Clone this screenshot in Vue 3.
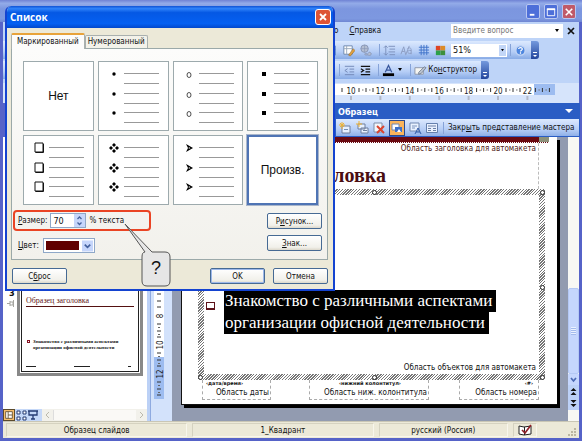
<script setup>
import { ref } from 'vue'

const size = ref('70')
const zoom = ref('51%')
const question = ref('')
const selected = ref(7)
const presets = [
  { kind: 'none', label: 'Нет' },
  { kind: 'dot' },
  { kind: 'circle' },
  { kind: 'square' },
  { kind: 'box' },
  { kind: 'diamonds' },
  { kind: 'arrow' },
  { kind: 'custom', label: 'Произв.' }
]
const rows = [12, 32, 51]
const rulerMarks = [10, 12, 14, 16, 18, 20, 22]
const sideMarks = [8, 10, 12]
const handles = ['tr', 'mr', 'br', 'bc', 'bl', 'tc']
</script>

<template>
  <div class="window">
    <header class="titlebar">
      <button class="cap" aria-label="Свернуть"><svg viewBox="0 0 13 13"><path d="M3 9.5h5" stroke="#fff" stroke-width="2" /></svg></button>
      <button class="cap" aria-label="Развернуть"><svg viewBox="0 0 13 13"><path d="M2.5 3.5h8v7h-8z" fill="none" stroke="#fff" /><path d="M2 3.5h9" stroke="#fff" stroke-width="2" /></svg></button>
      <button class="cap red" aria-label="Закрыть"><svg viewBox="0 0 13 13"><path d="M3 3l7 7M10 3l-7 7" stroke="#fff" stroke-width="1.7" /></svg></button>
    </header>

    <nav class="menubar">
      <div class="menus">
        <a href="#">о</a>
        <a href="#"><u>С</u>правка</a>
      </div>
      <label class="ask">
        <input v-model="question" placeholder="Введите вопрос" aria-label="Введите вопрос">
        <svg viewBox="0 0 6 4"><path d="M1 0h4L3 3z" /></svg>
      </label>
      <button class="plain" aria-label="Закрыть окно"><svg width="8" height="8" viewBox="0 0 8 8"><path d="M1 1l6 6M7 1L1 7" stroke="#111" stroke-width="1.7" /></svg></button>
    </nav>

    <div class="bar">
      <div class="strip">
        <svg class="ico wide" viewBox="0 0 16 14"><path d="M1 2h12v10H1z" fill="#fff" stroke="#3767b8" /><path d="M1 6h12M6 2v10" stroke="#3767b8" /></svg>
        <svg class="ico" viewBox="0 0 14 14"><path d="M2 2h9v9H2z" fill="#fff" stroke="#6b86ad" /><path d="M2 5h9M5 2v9" stroke="#9ab" /><path d="M7 12l5-7 2 2-5 6z" fill="#e2a13c" stroke="#8c6730" stroke-width=".6" /></svg>
        <svg class="ico" viewBox="0 0 14 14"><circle cx="6" cy="5" r="4" fill="#b5bfd2" stroke="#8795b5" /><path d="M2 5h8M6 1v8" stroke="#8795b5" stroke-width=".7" /><path d="M6 11c2-2 3 1 4-1s2-1 3 0-1 3-3 2-2 1-4-1z" fill="#b5bfd2" stroke="#8795b5" /></svg>
        <i class="sep"></i>
        <svg class="ico" viewBox="0 0 14 14"><path d="M6 2.5h7M7 5.5h6M6 8.5h7M7 11.5h6M3 2v10M1 4l2-2 2 2M1 10l2 2 2-2" fill="none" stroke="#7b90bb" /></svg>
        <svg class="ico" viewBox="0 0 14 14"><path d="M1 11l3-8 2 8M2 8h3M8 5c3-2 4 0 4 1v5M12 7c-5-1-5 4 0 3M10 2L6 12" fill="none" stroke="#8b9cc0" /></svg>
        <svg class="ico" viewBox="0 0 14 14"><path d="M2 3.5h11M2 6.5h11M2 9.5h11M4.500 1v11M7.500 1v11M10.500 1v11" stroke="#3f73c9" /></svg>
        <svg class="ico color" viewBox="0 0 14 14"><path d="M2 2h5v5H2z" fill="#dd4425" /><path d="M7 2h5v5H7z" fill="#dc8b27" /><path d="M2 7h5v5H2z" fill="#2ca04a" /><path d="M7 7h5v5H7z" fill="#3d8f3c" /></svg>
        <span class="zoom">
          <select v-model="zoom" aria-label="Масштаб"><option>51%</option></select>
          <svg viewBox="0 0 6 4"><path d="M1 0h4L3 3z" /></svg>
        </span>
        <i class="sep"></i>
        <svg class="ico" viewBox="0 0 14 14"><circle cx="7" cy="7" r="5" fill="#4d86df" stroke="#c3d5f4" stroke-width="1.500" /><path d="M5 5.500c0-2 4-2 4 0 0 1.200-2 1.200-2 2.500M7 9v1.500" fill="none" stroke="#fff" stroke-width="1.300" /></svg>
      </div>
      <svg class="grip" viewBox="0 0 8 18"><path d="M2 11.500h4" stroke="#fff" /><path d="M2 14h4L4 16z" fill="#fff" /></svg>
      <i class="after first"></i>
    </div>

    <div class="bar">
      <div class="strip">
        <i class="sep"></i>
        <svg class="ico mid" viewBox="0 0 14 14"><path d="M2 2.500h10M7 5.500h5M7 8.500h5M2 11.500h10M5 5L2 7l3 2" fill="none" stroke="#7187b5" /></svg>
        <svg class="ico mid" viewBox="0 0 14 14"><path d="M2 2.500h10M7 5.500h5M7 8.500h5M2 11.500h10M2 5l3 2-3 2" fill="none" stroke="#111" stroke-width="1.300" /></svg>
        <i class="sep"></i>
        <svg class="ico letter" viewBox="0 0 14 14"><path d="M3.500 9L7 1.500 10.500 9M5 6.500h4" fill="none" stroke="#38579c" stroke-width="1.300" /><path d="M1 10h12v3H1z" /></svg>
        <svg class="tri" viewBox="0 0 6 4"><path d="M1 0h4L3 3z" /></svg>
        <i class="sep"></i>
        <button class="tool"><svg class="ico" viewBox="0 0 14 14"><path d="M1 4h9v7H1z" fill="#f6f6f2" stroke="#8b95a8" /><path d="M5 9l6-6 2 1-5 6-3 1z" fill="#b9c2cf" stroke="#5f6b7e" stroke-width=".7" /></svg><span>Ко<u>н</u>структор</span></button>
      </div>
      <svg class="grip" viewBox="0 0 8 18"><path d="M2 11.500h4" stroke="#fff" /><path d="M2 14h4L4 16z" fill="#fff" /></svg>
      <i class="after second"></i>
    </div>

    <div class="ruler">
      <svg width="222" height="20" viewBox="0 0 222 20">
        <path d="M0 1h201v11H0z" fill="#fff" /><path d="M201 1h21v11h-21z" fill="#9dbcf0" />
        <g v-for="(m, i) in rulerMarks" :key="m">
          <path :d="`M${25 + i * 29.400} 5v4M${32 + i * 29.400} 5v4M${39 + i * 29.400} 5v4`" stroke="#333" transform="translate(1 0)" />
          <path :d="`M${28 + i * 29.400} 7h1.500M${35 + i * 29.400} 7h1.500`" stroke="#777" transform="translate(1 0)" />
          <path :d="`M${18 + i * 29.400} 13v4`" stroke="#b3b9c8" stroke-width="2" />
          <text :x="18 + i * 29.400" y="10.500" text-anchor="middle">{{ m }}</text>
        </g>
        <path d="M1 5v4M9 5v4" stroke="#333" />
      </svg>
    </div>

    <section class="master">
      <div class="mhead"><b>Образец</b><svg viewBox="0 0 8 5"><path d="M0 0h8L4 4z" fill="#fff" /></svg></div>
      <div class="mtools">
        <svg class="mi" viewBox="0 0 14 14"><path d="M4 5h8v7H4z" fill="#e8f1ff" stroke="#6e7f9d" /><path d="M6 8.500h4" stroke="#7890b5" /><path d="M4 1v7M1 4h6M2 2l4 4M6 2L2 6" stroke="#efb335" /></svg>
        <svg class="mi" viewBox="0 0 14 14"><path d="M3 3h7v5H3zM6 7h7v5H6z" fill="#e8f1ff" stroke="#6e7f9d" /><path d="M8 9.500h4" stroke="#6e7f9d" /><path d="M4 0v6M1 3h6" stroke="#efb335" /></svg>
        <svg class="mi" viewBox="0 0 14 14"><path d="M2 2h8v9H2z" fill="#f2f5fa" stroke="#7e8fa9" /><path d="M5 5l7 7M12 5l-7 7" stroke="#dc442d" stroke-width="2" /></svg>
        <svg class="mi on" viewBox="0 0 14 14"><path d="M2 3h7v6H2z" fill="#fff" stroke="#6e86b3" /><path d="M5 6h7v5H5z" fill="#3e70c8" /><path d="M7 11l2-3 2 3z" fill="#fff" /></svg>
        <svg class="mi" viewBox="0 0 14 14"><path d="M2 2h9v8H2z" fill="#e9f1ff" stroke="#7389b1" /><path d="M4 5h5M4 7h3" stroke="#7d94bd" /><path d="M7 13l3-6 3 6M8 11h4" fill="none" stroke="#335ca9" /></svg>
        <svg class="mi" viewBox="0 0 14 14"><path d="M1.500 2.500h11v9h-11z" fill="#e9f1ff" stroke="#6580ad" /><path d="M3 5h8M3 7.500h3M8 7.500h3M3 9.500h3M8 9.500h3" stroke="#6a7fa5" /></svg>
        <i class="sep"></i>
        <button class="tool">Закр<u>ы</u>ть представление мастера</button>
      </div>
    </section>

    <main class="work">
      <aside class="outline">
        <div class="thumbs">
          <div class="num"><b>3</b><svg width="8" height="7" viewBox="0 0 8 7"><path d="M0 3.500h3M3 1v5M3 2h3v3H3M6.500 0v7" fill="none" stroke="#a5a5a0" /></svg></div>
          <div class="thumb">
            <div class="thumb-in">
              <h3>Образец заголовка</h3>
              <p><i></i><span>Знакомство с различными аспектами организации офисной деятельности</span></p>
              <div class="dashes"><i></i><i class="long"></i><i class="short"></i></div>
            </div>
          </div>
        </div>
        <div class="views">
          <button class="view active" aria-label="Обычный"><svg viewBox="0 0 12 12"><path d="M2 2h8v8H2zM5 2v8M5 6h5" fill="#fff" stroke="#5b4a2c" /></svg></button>
          <button class="view" aria-label="Сортировщик"><svg viewBox="0 0 12 12"><path d="M2 2h3v3H2zM8 2h3v3H8zM2 8h3v3H2zM8 8h3v3H8z" fill="#fff" stroke="#253b73" /></svg></button>
          <button class="view" aria-label="Показ"><svg viewBox="0 0 12 12"><path d="M1 2h10M2 2v4h8V2M6 6v4M4 10h4" fill="none" stroke="#253b73" stroke-width="1.300" /></svg></button>
          <div class="hscroll"><svg viewBox="0 0 6 8"><path d="M5 1L2 4l3 3" /></svg><i></i><svg viewBox="0 0 6 8"><path d="M1 1l3 3-3 3" /></svg></div>
        </div>
      </aside>

      <div class="vruler">
        <svg width="10" height="112" viewBox="0 0 10 112">
          <path d="M0 0h10v70H0z" fill="#fff" /><path d="M0 70h10v42H0z" fill="#9dbcf0" />
          <g v-for="(m, i) in sideMarks" :key="m">
            <text :transform="`translate(8.500 ${29 + i * 29}) rotate(-90)`" text-anchor="middle">{{ m }}</text>
            <path :d="`M3 ${37 + i * 29}h4M3 ${44 + i * 29}h4M3 ${51 + i * 29 - 1}h4`" stroke="#333" />
            <path :d="`M4 ${40.500 + i * 29}h2M4 ${47.500 + i * 29}h2`" stroke="#666" />
          </g>
          <path d="M3 1h4M3 7h4M3 14h4M3 20h4" stroke="#333" />
        </svg>
      </div>

      <div class="canvas">
        <article class="slide">
          <div class="band"><i></i></div>
          <div class="title-area">
            <small>Область заголовка для автомакета</small>
            <h1>ловка</h1>
          </div>
          <div class="object">
            <i v-for="h in handles" :key="h" class="handle" :class="h"></i>
            <div class="object-in">
              <div class="item">
                <i class="mark"></i>
                <p><mark>Знакомство с различными аспектами</mark><mark>организации офисной деятельности</mark></p>
              </div>
              <small>Область объектов для автомакета</small>
            </div>
          </div>
          <footer class="fields">
            <div class="date"><em>‹дата/время›</em><small>Область даты</small></div>
            <div class="foot"><em>‹нижний колонтитул›</em><small>Область ниж. колонтитула</small></div>
            <div class="no"><em>‹#›</em><small>Область номера</small></div>
          </footer>
        </article>
      </div>

      <div class="vscroll">
        <i class="knob"></i>
        <svg class="down" viewBox="0 0 11 11"><path d="M3 4l2.500 3L8 4" fill="none" stroke="#4b69b3" stroke-width="1.700" /></svg>
        <svg class="dbl" viewBox="0 0 11 25"><path d="M5.500 3l3 3h-6zM5.500 7l3 3h-6zM2.500 15h6l-3 3zM2.500 19h6l-3 3z" fill="#111" /></svg>
      </div>
    </main>

    <footer class="status">
      <span>Образец слайдов</span><span>1_Квадрант</span><span>русский (Россия)</span>
      <span class="book"><svg width="14" height="12" viewBox="0 0 14 12"><path d="M1 2l5 1 7-1v8l-7 1-5-1zM6.500 3v8" fill="#fff" stroke="#222" /><path d="M4 6l3 3 6-8" fill="none" stroke="#8e2028" stroke-width="1.700" /></svg></span>
      <span class="rest"><svg width="9" height="9" viewBox="0 0 9 9"><path d="M7 1h2M4 4h2M7 4h2M1 7h2M4 7h2M7 7h2" stroke="#aaa58f" stroke-width="1.500" /></svg></span>
    </footer>

    <div class="dialog" role="dialog" aria-label="Список">
      <header class="dhead"><b>Список</b><button class="dclose" aria-label="Закрыть"><svg viewBox="0 0 14 14"><path d="M4 4l6 6M10 4l-6 6" stroke="#fff" stroke-width="1.800" /></svg></button></header>
      <div class="dbody">
        <div class="tabs"><button class="tab cur">Маркированный</button><button class="tab">Нумерованный</button></div>
        <div class="panel">
          <div class="grid">
            <button v-for="(p, i) in presets" :key="p.kind" class="card" :class="{ sel: selected === i }" :aria-label="p.label || p.kind" @click="selected = i">
              <span v-if="p.label">{{ p.label }}</span>
              <svg v-else viewBox="0 0 68 68">
                <g v-for="y in rows" :key="y">
                  <path :d="`M25 ${y - .500}h35M25 ${y + 9.500}h35`" stroke="#999" />
                  <g :transform="`translate(15 ${y})`">
                    <circle v-if="p.kind === 'dot'" r="1.700" />
                    <ellipse v-else-if="p.kind === 'circle'" rx="2" ry="2.500" cy="1" fill="none" stroke="#222" stroke-width=".8" />
                    <path v-else-if="p.kind === 'square'" d="M-2-2h4v4h-4z" />
                    <path v-else-if="p.kind === 'box'" d="M-4-5h8v9h-8z M4.500-4v8.500h-8" fill="none" stroke="#111" />
                    <path v-else-if="p.kind === 'diamonds'" d="M0-5l2 2-2 2-2-2zM0 1l2 2-2 2-2-2zM-3-2l2 2-2 2-2-2zM3-2l2 2-2 2-2-2z" />
                    <path v-else d="M-3-4L4 0l-7 4 2-4zM0-1l-.500 1.500h2z" fill-rule="evenodd" />
                  </g>
                </g>
              </svg>
            </button>
          </div>
          <div class="options">
            <div class="opt-left">
              <div class="size">
                <label for="size"><u>Р</u>азмер:</label>
                <div class="spin"><input id="size" v-model="size"><svg viewBox="0 0 11 13"><path d="M0 0h11v13H0z" fill="#c6d6fb" /><path d="M3.500 5l2-2 2 2M3.500 8.500l2 2 2-2" fill="none" stroke="#44619d" stroke-width="1.300" /></svg></div>
                <span>% текста</span>
              </div>
              <div class="colour">
                <label for="colour"><u>Ц</u>вет:</label>
                <div class="pick"><select id="colour"><option value="#600000"></option></select><i></i><svg viewBox="0 0 12 12"><path d="M0 0h12v12H0z" fill="#c6d6fb" /><path d="M3 4.500l3 3 3-3" fill="none" stroke="#44619d" stroke-width="1.800" /></svg></div>
              </div>
            </div>
            <div class="opt-right"><button class="btn">Р<u>и</u>сунок...</button><button class="btn"><u>З</u>нак...</button></div>
          </div>
        </div>
        <div class="actions"><button class="btn">С<u>б</u>рос</button><button class="btn ok">OK</button><button class="btn">Отмена</button></div>
      </div>
    </div>

    <div class="callout">
      <svg viewBox="0 0 48 66"><path d="M21 30L1 2l27 28h13q5 0 5 5v24q0 5-5 5H23q-5 0-5-5V35q0-5 3-5z" fill="#e6e6e6" stroke="#555" /></svg>
      <span>?</span>
    </div>
  </div>
</template>

<style>
body { margin: 0; }
</style>

<style scoped>
* { box-sizing: border-box; }
.window { position: relative; min-height: 100vh; display: flex; flex-direction: column; padding: 0 3px 3px; background: #5663c8; font-family: "DejaVu Sans Condensed", "DejaVu Sans", sans-serif; font-size: 8px; line-height: 12px; color: #111; overflow: hidden; }
button { font: inherit; color: inherit; padding: 0; margin: 0; border: 0; background: none; }
input, select { font: inherit; color: inherit; margin: 0; padding: 0; border: 0; outline: 0; background: none; appearance: none; min-width: 0; }
a { color: inherit; text-decoration: none; }
svg { display: block; flex: none; }
u { text-underline-offset: 1px; }
.titlebar { margin: 0 -3px; height: 22px; padding: 4px 6px 0; display: flex; justify-content: flex-end; gap: 4px; background: linear-gradient(#6f82d4, #93abe8 15%, #7c96df 40%, #7d98e0 85%, #6f86d2); }
.cap { width: 14px; height: 15px; border: 1px solid #b9c7f0; border-radius: 2px; background: #4d6fd9; }
.cap.red { background: #c05a68; }
.menubar { height: 18px; display: flex; align-items: center; background: #bed4f8; padding-right: 4px; }
.menus { flex: 1; display: flex; gap: 11px; padding-left: 331px; }
.ask { display: flex; align-items: center; width: 112px; height: 14px; background: #fff; padding-right: 3px; }
.ask input { flex: 1; padding-left: 2px; }
.ask input::placeholder { color: #777; opacity: 1; }
.ask svg, .zoom svg, .tri { width: 6px; height: 4px; }
.plain { margin-left: 4px; }
.bar { height: 20px; display: flex; background: #bed4f8; padding: 1px 0; }
.strip { flex: 1; display: flex; align-items: center; justify-content: flex-end; background: linear-gradient(#dce9fe, #b5cdf6 60%, #88abe5); }
.grip { width: 8px; height: 18px; background: linear-gradient(#7399dd, #23459c); border-radius: 0 3px 3px 0; }
.after.first { width: 40px; }
.after.second { width: 90px; }
.ico { width: 13px; height: 13px; margin-right: 4px; }
.ico.wide { width: 15px; }
.ico.mid { margin-right: 3px; }
.ico.letter { margin-right: 2px; }
.tri { margin-right: 4px; }
.sep { width: 1px; height: 12px; background: #86a3d8; margin: 0 3px; flex: none; }
.zoom { display: flex; align-items: center; background: #fff; width: 56px; height: 13px; padding-right: 1px; font-size: 9px; }
.zoom select { flex: 1; padding-left: 2px; }
.zoom svg { width: 7px; height: 11px; padding: 4px 0; background: #c2d6f7; }
.tool { display: flex; align-items: center; white-space: nowrap; }
.tool .ico { margin-right: 1px; }
.strip .tool { margin-right: 4px; }
.ruler { height: 23px; background: linear-gradient(#bed4f8 0 3px, #d6e4fb 3px); padding: 3px 24px 0 0; display: flex; justify-content: flex-end; }
.ruler text, .vruler text { font-size: 8px; fill: #222; }
.master { margin-left: 331px; height: 34px; border: 1px solid #2a5dc4; border-left-width: 2px; background: #2a5dc4; position: relative; z-index: 1; margin-right: -1px; }
.mhead { height: 15px; display: flex; align-items: center; justify-content: space-between; color: #fff; padding: 0 6px 0 2px; font-size: 9px; }
.mhead svg { width: 8px; height: 5px; }
.mtools { height: 17px; display: flex; align-items: center; gap: 3px; background: linear-gradient(#dce9fe, #b7cef6 60%, #8fb0e8); padding: 0 3px 0 2px; }
.mi { width: 14px; height: 14px; }
.mi.on { width: 16px; height: 16px; background: #f9b45c; border: 1px solid #2a4a8e; }
.mtools .sep { margin: 0 1px; }
.work { flex: 1; display: flex; background: #929bb0; min-height: 284px; }
.outline { width: 144px; background: #fff; display: flex; flex-direction: column; }
.thumbs { flex: 1; display: flex; padding: 0 4px 33px 3px; align-items: flex-end; }
.num { width: 11px; height: 89px; display: flex; flex-direction: column; gap: 1px; padding-left: 1px; font-size: 9px; }
.num b { padding-left: 2px; }
.thumb { flex: 1; height: 100px; border: 3px solid #888; border-top: 0; padding: 0 1px 1px; }
.thumb-in { height: 96px; border: 1px solid #222; padding: 18px 4px 0; font-family: "Liberation Serif", serif; display: flex; flex-direction: column; }
.thumb h3 { margin: 0; font-size: 8px; line-height: 11px; font-weight: 400; color: #651818; border-bottom: 1px solid #551111; }
.thumb p { display: flex; gap: 3px; margin: 32px 10px 0 1px; font-size: 5px; line-height: 6px; font-weight: 700; }
.thumb p i { width: 3px; height: 3px; border: 1px solid #812; margin-top: 1px; flex: none; }
.dashes { display: flex; justify-content: space-between; margin: 15px 3px 0 0; }
.dashes i { width: 10px; height: 1px; background: #222; }
.dashes .long { width: 16px; }
.dashes .short { width: 3px; }
.views { height: 12px; display: flex; background: #c5d8f8; }
.view { width: 12px; height: 12px; }
.view.active { background: #f6bd6c; border: 1px solid #5b4a2c; }
.view svg { width: 100%; height: 100%; }
.hscroll { flex: 1; display: flex; align-items: center; gap: 3px; margin-left: 3px; background: #f2f1eb; padding: 0 2px; }
.hscroll i { flex: 1; height: 10px; background: #faf9f6; border-left: 1px solid #ddd; }
.hscroll svg { width: 6px; height: 8px; fill: none; stroke: #bbb9ac; }
.vruler { width: 25px; padding: 0 8px 22px 7px; display: flex; align-items: flex-end; background: linear-gradient(90deg, #bcd1f6 0 3px, #8eaae0 3px 4px, #d3e2fb 4px); }
.canvas { flex: 1; padding: 0 8px 16px 9px; min-width: 0; }
.slide { height: 100%; display: flex; flex-direction: column; background: #fff; border-left: 1px solid #111; border-bottom: 1px solid #111; box-shadow: 3px 3px 0 #000; padding: 0 12px 4px 16px; margin-right: 3px; }
.band { height: 6px; background: #6a0a12; margin-right: -4px; display: flex; justify-content: flex-end; border-bottom: 1px dotted #fff; }
.band i { width: 10px; height: 5px; background: #8d927c; }
.title-area { height: 46px; margin-right: 6px; border-right: 1px dashed #bbb; text-align: right; padding: 0 2px; }
small { font-size: 8px; line-height: 12px; white-space: nowrap; }
.title-area small { display: block; color: #4f1c20; }
h1 { margin: 7px 150px 0 0; font: 700 20px/26px "Liberation Serif", serif; color: #4a0d12; white-space: nowrap; }
.object { flex: 1; position: relative; padding: 6px; background: repeating-linear-gradient(135deg, #777 0 1px, #fff 1px 2px); }
.object-in { height: 100%; background: #fff; display: flex; flex-direction: column; justify-content: flex-end; align-items: flex-end; padding-right: 3px; }
.item { display: flex; width: 100%; gap: 9px; padding-left: 2px; margin-bottom: 28px; }
.item .mark { width: 9px; height: 8px; border: 1px solid #5d1219; border-bottom-width: 2px; margin-top: 12px; flex: none; }
.item p { margin: 0; font: 17px/22px "Liberation Serif", serif; white-space: nowrap; display: flex; flex-direction: column; align-items: flex-start; }
.item mark { background: #000; color: #fff; padding: 0 4px 0 1px; }
.handle { position: absolute; width: 5px; height: 5px; border: 1px solid #222; border-radius: 50%; background: #fff; }
.tr { right: 0; top: 1px; } .br { right: 0; bottom: 0; } .mr { right: 0; top: 50%; }
.bl { left: 0; bottom: 0; } .bc { left: 50%; bottom: 0; } .tc { left: 50%; top: 1px; }
.fields { height: 20px; display: flex; margin: 0 6px 0 4px; }
.fields > div { border: 1px dashed #aaa; border-top: 0; text-align: right; padding-right: 1px; line-height: 6px; display: flex; flex-direction: column; }
.fields em { font: 700 5px/7px "DejaVu Sans", sans-serif; text-align: left; padding-left: 3px; }
.fields .foot em { text-align: center; }
.fields .no em { text-align: right; padding-right: 4px; }
.date { width: 69px; } .foot { width: 120px; margin: 0 30px 0 auto; } .no { width: 80px; }
.vscroll { width: 11px; background: #f8f8f4; display: flex; flex-direction: column; justify-content: flex-end; padding-bottom: 11px; }
.knob { height: 86px; background: repeating-linear-gradient(#eaf1ff 0 1px, #a4bbec 1px 2px) center / 5px 8px no-repeat, #c5d6fd; border: 1px solid #b4c8f4; border-radius: 2px; }
.down { height: 11px; background: #c5d6fd; }
.dbl { height: 25px; background: #bcd1f6; }
.status { height: 17px; display: flex; gap: 5px; align-items: center; background: #ece9d8; border-top: 1px solid #c9c6b5; text-align: center; padding: 0 3px; }
.status span { flex: 1 1 182px; height: 14px; line-height: 14px; border: 1px solid #dedbc9; border-color: #d5d2c0 #f8f6ec #f8f6ec #d5d2c0; }
.status span:nth-child(3) { flex-basis: 130px; }
.status .book { flex: 0 0 24px; display: flex; justify-content: center; }
.status .rest { flex: 0 0 34px; border: 0; display: flex; justify-content: flex-end; align-items: flex-end; }
.dialog { position: absolute; z-index: 2; left: 5px; top: 6px; width: 330px; background: #ece9d8; border: solid #1443d0; border-width: 0 2px 2px; border-radius: 6px 6px 0 0; overflow: hidden; }
.dhead { height: 22px; margin: 0 -2px; padding: 0 4px 0 5px; display: flex; align-items: center; justify-content: space-between; color: #fff; background: linear-gradient(#0f52d5, #2f83fa 12%, #0558e4 30%, #0560f2 80%, #0348cc); }
.dhead b { font: 700 10px/14px "Open Sans", sans-serif; }
.dclose { width: 16px; height: 16px; border: 1px solid #fff; border-radius: 3px; background: #dd5435; }
.dbody { padding: 5px 5px 5px 4px; }
.tabs { display: flex; align-items: flex-end; height: 15px; }
.tab { height: 13px; border: 1px solid #a9b0ae; border-bottom: 0; border-radius: 2px 2px 0 0; background: #f3f2ea; padding: 0 2px; white-space: nowrap; }
.tab.cur { height: 16px; background: #fcfcfb; border-top: 2px solid #e8a33a; margin-bottom: -1px; padding: 0 5px; position: relative; }
.panel { border: 1px solid #9ba9a9; background: linear-gradient(#fcfcfb, #f2f1ec); padding: 12px 5px 6px 1px; }
.grid { display: grid; grid-template-columns: repeat(4, 1fr); gap: 4px; padding: 0 4px 0 10px; }
.card { height: 70px; border: 1px solid #9daaad; background: #fff; display: flex; align-items: center; justify-content: center; font: 12px/14px "Liberation Sans", sans-serif; }
.card svg { width: 68px; height: 68px; }
.card.sel { border: 2px solid #4f74b4; outline: 1px solid #a9b6cb; }
.options { display: flex; justify-content: space-between; padding-top: 5px; }
.size { display: flex; align-items: center; gap: 3px; width: 138px; height: 21px; border: 2px solid #ea4424; border-radius: 4px; padding-left: 3px; white-space: nowrap; }
.spin { display: flex; width: 36px; height: 15px; border: 1px solid #8fa8c8; background: #fff; font-size: 9px; }
.spin input { flex: 1; width: 0; padding-left: 2px; }
.spin svg { width: 11px; height: 13px; }
.colour { display: flex; align-items: center; gap: 4px; padding: 7px 0 0 5px; }
.pick { display: flex; align-items: center; width: 52px; height: 15px; border: 1px solid #8fa8c8; background: #fff; padding: 0 1px 0 2px; position: relative; }
.pick select { position: absolute; inset: 0; width: 100%; opacity: 0; }
.pick i { flex: 1; height: 9px; background: #600000; margin-right: 3px; }
.pick svg { width: 11px; height: 12px; }
.opt-right { display: flex; flex-direction: column; gap: 6px; padding-top: 3px; }
.btn { width: 55px; height: 16px; border: 1px solid #466a94; border-radius: 2px; background: linear-gradient(#fff, #f1f0ea 80%, #dcd8cb); line-height: 13px; }
.btn.ok { box-shadow: inset 0 0 0 1px #9db8ea; }
.actions { display: flex; gap: 8px; padding: 8px 0 0 1px; }
.actions .btn:first-child { margin-right: auto; }
.callout { position: absolute; z-index: 3; left: 124px; top: 222px; width: 48px; height: 66px; }
.callout svg { width: 48px; height: 66px; }
.callout span { position: absolute; left: 18px; right: 2px; bottom: 10px; text-align: center; font: 18px/20px "Liberation Sans", sans-serif; }
</style>
